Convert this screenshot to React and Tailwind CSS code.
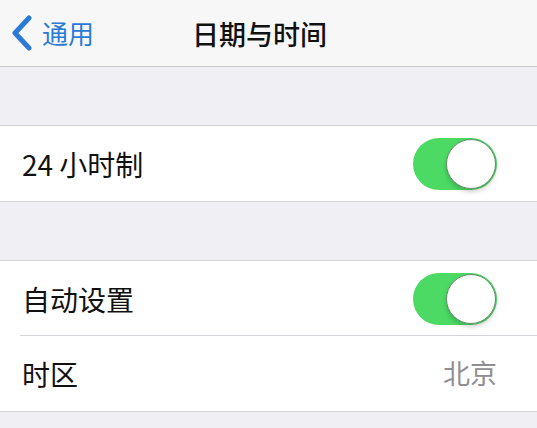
import React from "react";

const font = { fontFamily: '"Noto Sans CJK SC", "Noto Sans", sans-serif' };

function Toggle() {
  return (
    <div className="relative w-[84px] h-[52px] rounded-full bg-[#4cd964]">
      <div className="absolute right-[1px] top-[1px] w-[50px] h-[50px] rounded-full bg-white border border-[#5f8f6a] shadow-[0_3px_4px_rgba(0,0,0,0.18)]" />
    </div>
  );
}

function Row({ label, children, last }) {
  return (
    <div className="relative flex items-center justify-between h-[75px] pl-[22px] pr-[40px] bg-white">
      <span className="text-[28px] text-[#111]">{label}</span>
      {children}
      {!last && <div className="absolute left-[20px] right-0 bottom-0 h-px bg-[#d4d4d8]" />}
    </div>
  );
}

export default function App() {
  return (
    <div className="w-[537px] h-[428px] bg-[#efeff4] overflow-hidden" style={font}>
      <div className="flex items-center h-[67px] bg-[#f7f7f8] border-b border-[#c8c7cc]">
        <div className="flex items-center pl-[10px] text-[#2b7bd6]">
          <svg width="24" height="36" viewBox="0 0 24 36" fill="none">
            <path d="M19 3 L5 18 L19 33" stroke="#2b7bd6" strokeWidth="5" strokeLinecap="round" strokeLinejoin="round" />
          </svg>
          <span className="ml-[8px] text-[26px] leading-none">通用</span>
        </div>
        <span className="ml-[98px] text-[27px] font-medium text-[#111] leading-none">日期与时间</span>
      </div>
      <div className="h-[58px]" />
      <div className="border-y border-[#d4d4d8]">
        <Row label="24 小时制" last>
          <Toggle />
        </Row>
      </div>
      <div className="h-[58px]" />
      <div className="border-y border-[#d4d4d8]">
        <Row label="自动设置">
          <Toggle />
        </Row>
        <Row label="时区" last>
          <span className="text-[27px] text-[#8e8e93]">北京</span>
        </Row>
      </div>
    </div>
  );
}
